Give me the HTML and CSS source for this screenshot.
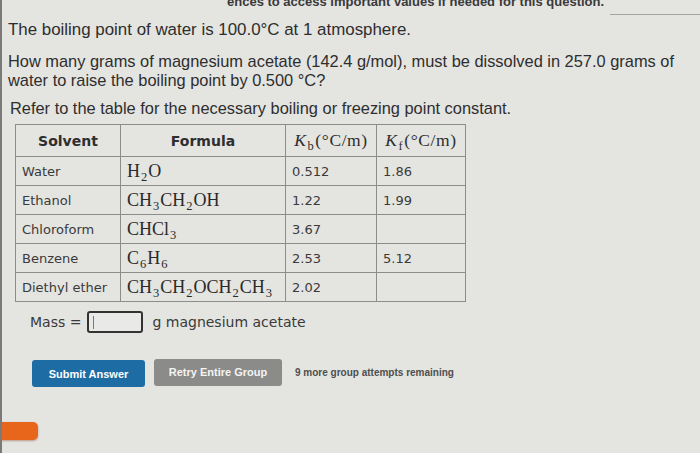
FILE: index.html
```html
<!DOCTYPE html>
<html>
<head>
<meta charset="utf-8">
<link rel="stylesheet" href="styles.css">
</head>
<body>
<div class="page">
  <div class="top">
    <span class="note">ences to access important values if needed for this question.</span>
    <span class="rule"></span>
  </div>
  <p class="p1">The boiling point of water is 100.0°C at 1 atmosphere.</p>
  <p class="p2">How many grams of magnesium acetate (142.4 g/mol), must be dissolved in 257.0 grams of water to raise the boiling point by 0.500 °C?</p>
  <p class="p3">Refer to the table for the necessary boiling or freezing point constant.</p>
  <table class="tbl">
    <tr class="head">
      <th class="c1">Solvent</th>
      <th class="c2">Formula</th>
      <th class="c3 m"><i>K</i><sub>b</sub>(°C/m)</th>
      <th class="c4 m"><i>K</i><sub>f</sub>(°C/m)</th>
    </tr>
    <tr>
      <td>Water</td><td class="m">H<sub>2</sub>O</td><td>0.512</td><td>1.86</td>
    </tr>
    <tr>
      <td>Ethanol</td><td class="m">CH<sub>3</sub>CH<sub>2</sub>OH</td><td>1.22</td><td>1.99</td>
    </tr>
    <tr>
      <td>Chloroform</td><td class="m">CHCl<sub>3</sub></td><td>3.67</td><td></td>
    </tr>
    <tr>
      <td>Benzene</td><td class="m">C<sub>6</sub>H<sub>6</sub></td><td>2.53</td><td>5.12</td>
    </tr>
    <tr>
      <td>Diethyl ether</td><td class="m">CH<sub>3</sub>CH<sub>2</sub>OCH<sub>2</sub>CH<sub>3</sub></td><td>2.02</td><td></td>
    </tr>
  </table>
  <div class="mass">
    <span>Mass =</span>
    <span class="box"><span class="caret"></span></span>
    <span>g magnesium acetate</span>
  </div>
  <div class="actions">
    <button class="btn submit">Submit Answer</button>
    <button class="btn retry">Retry Entire Group</button>
    <span class="remain">9 more group attempts remaining</span>
  </div>
  <div class="bottom">
    <span class="orange"></span>
  </div>
</div>
</body>
</html>
```
FILE: styles.css
```css
html, body {
  margin: 0;
  padding: 0;
  background: #e4e4e1;
}
.page {
  width: 700px;
  height: 453px;
  overflow: hidden;
  box-sizing: border-box;
  border-left: 2px solid #7a7a78;
  font-family: "Liberation Sans", Arial, sans-serif;
  color: #2e2e2e;
}
.top {
  display: flex;
  align-items: flex-end;
  height: 15px;
  margin-top: -2px;
}
.note {
  margin-left: 225px;
  font-size: 13px;
  font-weight: bold;
  color: #3a3a3a;
  line-height: 12px;
  white-space: nowrap;
  transform: translateY(-5px);
}
.rule {
  flex: 1;
  margin-left: 6px;
  border-bottom: 1px solid #a4a4a2;
  transform: translateY(2px);
}
p {
  margin: 0;
}
.p1 {
  margin-top: 7px;
  margin-left: 6px;
  line-height: 20px;
  font-size: 16.9px;
}
.p2 {
  margin-top: 12px;
  margin-left: 6px;
  line-height: 19px;
  width: 685px;
  font-size: 16.4px;
}
.p3 {
  margin-top: 8px;
  margin-left: 8px;
  line-height: 20px;
  font-size: 16.4px;
}
.tbl {
  margin-top: 6px;
  margin-left: 13px;
  border-collapse: collapse;
  font-family: "DejaVu Sans", Verdana, sans-serif;
  font-size: 13px;
  color: #3a3a3a;
}
.tbl th, .tbl td {
  border: 1px solid #8c8c8a;
  padding: 0 6px;
  text-align: left;
  white-space: nowrap;
}
.tbl tr { height: 29px; }
.tbl tr.head { height: 32px; }
.tbl th {
  text-align: center;
  font-size: 14px;
  font-weight: bold;
  color: #2e2e2e;
}
.c1 { width: 92px; }
.c2 { width: 152px; }
.c3 { width: 84px; }
.c4 { width: 82px; }
.m {
  font-family: "Liberation Serif", "Times New Roman", serif;
  font-size: 18px;
  color: #2a2a2a;
}
.tbl th.m {
  font-weight: normal;
  padding: 0 3px;
  font-size: 17.5px;
  letter-spacing: 0.6px;
}
.m sub {
  font-size: 12.5px;
  vertical-align: -4px;
  line-height: 0;
  margin: 0 1px;
}
.mass {
  display: flex;
  align-items: center;
  gap: 6px;
  margin-top: 9px;
  margin-left: 28px;
  font-family: "DejaVu Sans", Verdana, sans-serif;
  font-size: 14px;
  color: #3a3a3a;
}
.box {
  width: 56px;
  height: 22px;
  border: 2px solid #333;
  border-radius: 3px;
  margin-right: 3px;
  display: flex;
  align-items: center;
  padding-left: 4px;
  box-sizing: border-box;
  background: #e9e9e7;
}
.caret {
  width: 1px;
  height: 13px;
  background: #777;
}
.actions {
  display: flex;
  align-items: center;
  margin-top: 24px;
  margin-left: 30px;
}
.btn {
  border: none;
  border-radius: 3px;
  font-family: "Liberation Sans", Arial, sans-serif;
  font-weight: bold;
  font-size: 11px;
  color: #fff;
  height: 27px;
  padding: 0;
}
.submit {
  width: 113px;
  background: #1d6ca4;
  margin-top: 3px;
}
.retry {
  width: 128px;
  margin-left: 9px;
  background: #8b8b89;
  color: #f4f4f4;
}
.remain {
  margin-left: 13px;
  font-size: 10px;
  font-weight: bold;
  color: #4e4e4e;
}
.bottom {
  margin-top: 35px;
  margin-left: -2px;
}
.orange {
  display: block;
  width: 38px;
  height: 18px;
  background: #e8661c;
  border-radius: 0 5px 5px 0;
  box-shadow: 0 1px 2px rgba(120, 40, 0, 0.4);
}
```
